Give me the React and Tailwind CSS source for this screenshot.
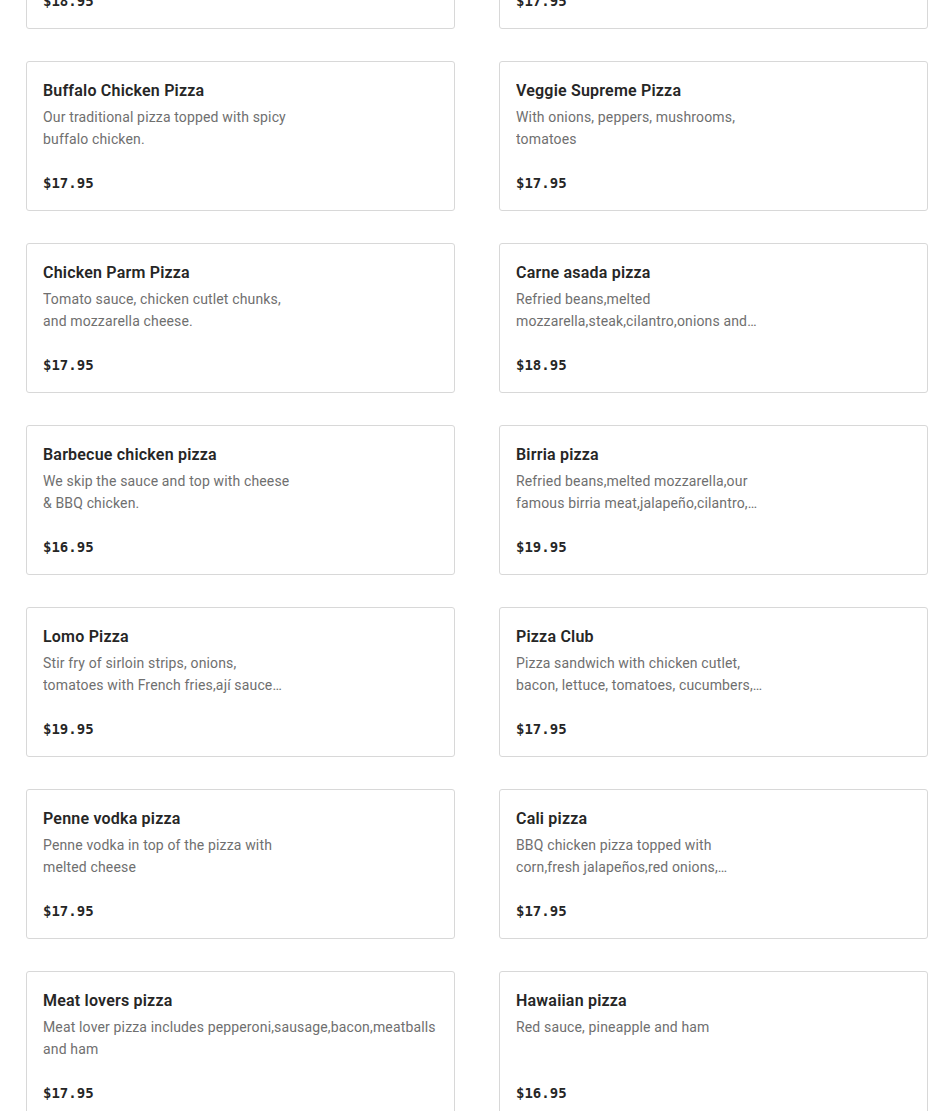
const items = [
  { name: 'Pepperoni Pizza', desc: 'Classic red sauce, mozzarella and pepperoni.', price: '$18.95' },
  { name: 'Margherita Pizza', desc: 'Fresh mozzarella, tomato and basil.', price: '$17.95' },
  { name: 'Buffalo Chicken Pizza', desc: 'Our traditional pizza topped with spicy buffalo chicken.', price: '$17.95' },
  { name: 'Veggie Supreme Pizza', desc: 'With onions, peppers, mushrooms, tomatoes', price: '$17.95' },
  { name: 'Chicken Parm Pizza', desc: 'Tomato sauce, chicken cutlet chunks, and mozzarella cheese.', price: '$17.95' },
  { name: 'Carne asada pizza', desc: 'Refried beans,melted mozzarella,steak,cilantro,onions and avocado sauce', price: '$18.95' },
  { name: 'Barbecue chicken pizza', desc: 'We skip the sauce and top with cheese & BBQ chicken.', price: '$16.95' },
  { name: 'Birria pizza', desc: 'Refried beans,melted mozzarella,our famous birria meat,jalapeño,cilantro, onions and consommé', price: '$19.95' },
  { name: 'Lomo Pizza', desc: 'Stir fry of sirloin strips, onions, tomatoes with French fries,ají sauce and mozzarella', price: '$19.95' },
  { name: 'Pizza Club', desc: 'Pizza sandwich with chicken cutlet, bacon, lettuce, tomatoes, cucumbers, mayo', price: '$17.95' },
  { name: 'Penne vodka pizza', desc: 'Penne vodka in top of the pizza with melted cheese', price: '$17.95' },
  { name: 'Cali pizza', desc: 'BBQ chicken pizza topped with corn,fresh jalapeños,red onions, cilantro and ranch', price: '$17.95' },
  { name: 'Meat lovers pizza', desc: 'Meat lover pizza includes pepperoni,sausage,bacon,meatballs and ham', price: '$17.95', wide: true },
  { name: 'Hawaiian pizza', desc: 'Red sauce, pineapple and ham', price: '$16.95' },
];

function MenuCard({ item }) {
  return (
    <div className="h-[150px] border border-[#d8d8d8] rounded-[3px] bg-white px-4 pt-[17px] pb-4">
      <h3 className="text-[16px] leading-6 font-semibold tracking-[0.2px] text-[#262626] truncate">{item.name}</h3>
      <p
        className={
          'mt-[3px] h-[44px] text-[14px] leading-[22px] tracking-[0.15px] text-[#6f6f6f] line-clamp-2 ' +
          (item.wide ? 'max-w-full' : 'max-w-[250px]')
        }
      >
        {item.desc}
      </p>
      <p className="mt-[22px] text-[14px] leading-[22px] font-bold text-[#262626] font-['DejaVu_Sans_Mono',monospace]">
        {item.price}
      </p>
    </div>
  );
}

export default function App() {
  return (
    <div className="w-[950px] h-[1111px] overflow-hidden bg-white font-['Roboto','Noto_Sans',sans-serif]">
      <div className="-mt-[121px] pl-[26px] grid grid-cols-[429px_429px] gap-x-[44px] gap-y-[32px]">
        {items.map((item, idx) => (
          <MenuCard key={idx} item={item} />
        ))}
      </div>
    </div>
  );
}
